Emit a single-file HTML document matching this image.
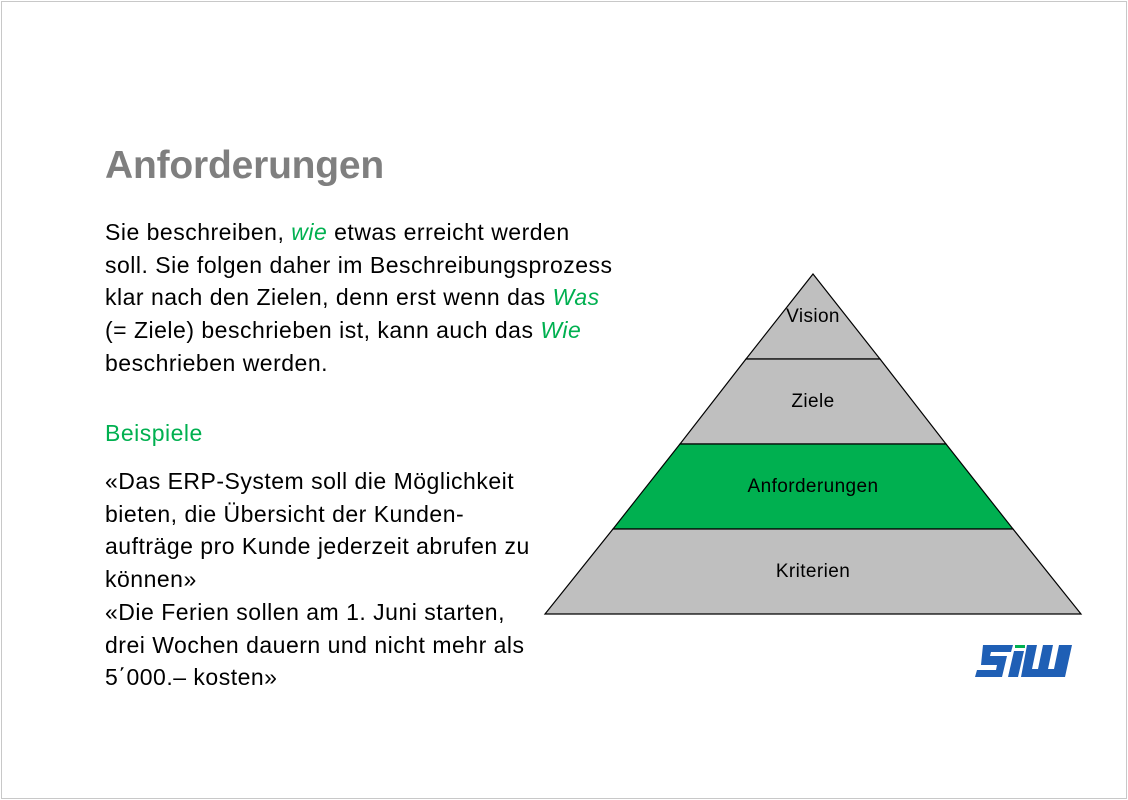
<!DOCTYPE html>
<html><head><meta charset="utf-8"><style>
html,body{margin:0;padding:0}
body{width:1128px;height:800px;position:relative;background:#fff;font-family:"Liberation Sans",sans-serif;overflow:hidden}
.frame{position:absolute;left:1px;top:1px;width:1124px;height:796px;border:1px solid #c8c8c8}
.t{position:absolute;left:105px;top:144px;font-size:39px;font-weight:bold;color:#7f7f7f;letter-spacing:-0.2px}
.p{position:absolute;left:105px;font-size:23px;line-height:32.7px;color:#000;letter-spacing:0.5px;white-space:nowrap}
.g{color:#00b050}
.logo{position:absolute;left:975px;top:640px;width:97px;height:40px}
</style></head><body>
<div class="frame"></div>
<div class="t">Anforderungen</div>
<div class="p" style="top:216px">Sie beschreiben, <i class="g">wie</i> etwas erreicht werden<br>soll. Sie folgen daher im Beschreibungsprozess<br>klar nach den Zielen, denn erst wenn das <i class="g">Was</i><br>(= Ziele) beschrieben ist, kann auch das <i class="g">Wie</i><br>beschrieben werden.</div>
<div class="p g" style="top:417px">Beispiele</div>
<div class="p" style="top:465px">«Das ERP-System soll die Möglichkeit<br>bieten, die Übersicht der Kunden-<br>aufträge pro Kunde jederzeit abrufen zu<br>können»<br>«Die Ferien sollen am 1. Juni starten,<br>drei Wochen dauern und nicht mehr als<br>5΄000.– kosten»</div>
<svg style="position:absolute;left:0;top:0" width="1128" height="800">
<g stroke="#000" stroke-width="1.2">
<polygon points="813,274 880,359 746,359" fill="#bfbfbf"/>
<polygon points="746,359 880,359 946,444 680,444" fill="#bfbfbf"/>
<polygon points="680,444 946,444 1013,529 613,529" fill="#00b050"/>
<polygon points="613,529 1013,529 1081,614 545,614" fill="#bfbfbf"/>
</g>
<g font-family="Liberation Sans, sans-serif" font-size="19" text-anchor="middle" fill="#000" letter-spacing="0.4">
<text x="813" y="322">Vision</text>
<text x="813" y="407">Ziele</text>
<text x="813" y="492">Anforderungen</text>
<text x="813" y="577">Kriterien</text>
</g>
<g transform="translate(975,645)">
<path d="M8 0 H38 L36 7 H16 L15 11 H32 L27 32 H0 L2 25 H21 L22 20 H6 Z" fill="#1f5fb5"/>
<rect x="40" y="0" width="10" height="3" fill="#00b050"/>
<path d="M39 6 H49 L43 32 H33 Z" fill="#1f5fb5"/>
<path d="M52 0 H62 L57 24 H63 L68 0 H78 L73 24 H79 L84 0 H97 L90 32 H46 Z" fill="#1f5fb5"/>
</g>
</svg>
</body></html>
